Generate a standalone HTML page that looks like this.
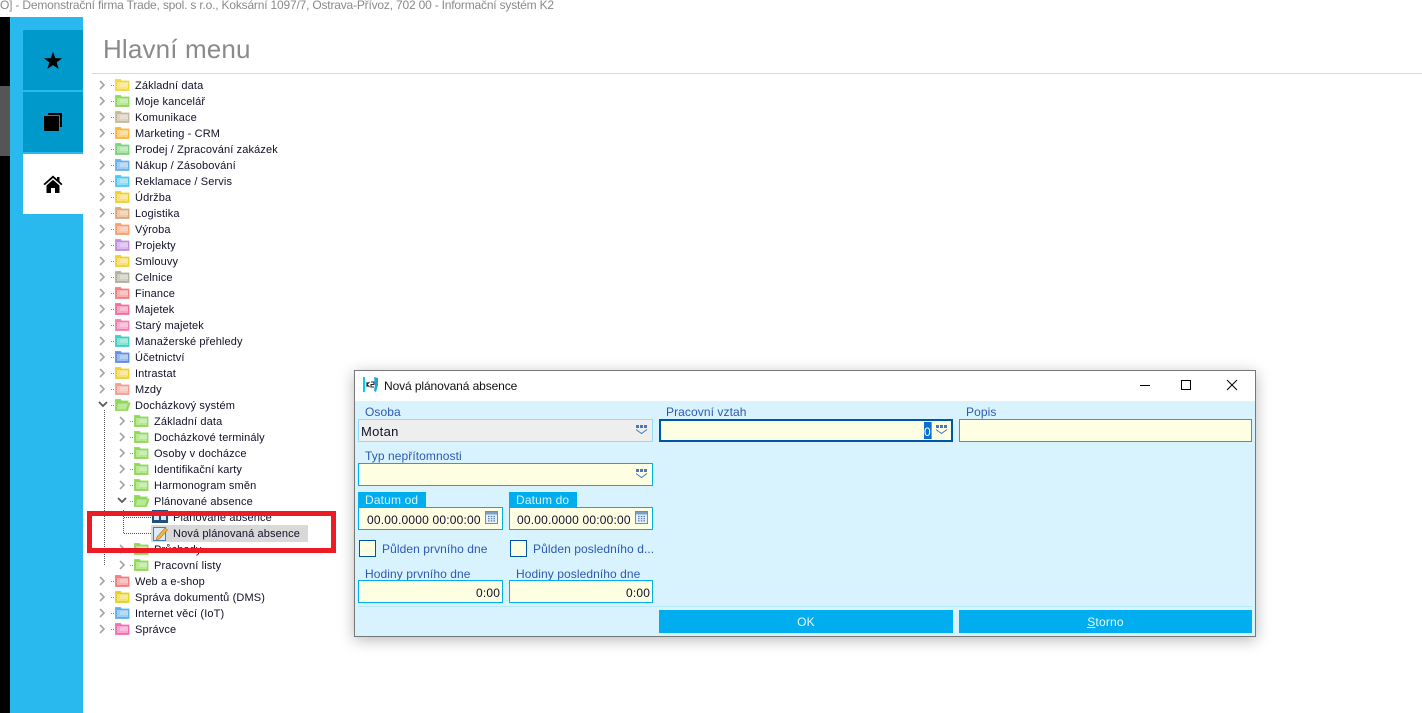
<!DOCTYPE html>
<html lang="cs">
<head>
<meta charset="utf-8">
<title>Hlavní menu</title>
<style>
html,body{margin:0;padding:0;background:#fff}
body{width:1422px;height:713px;position:relative;overflow:hidden;font-family:"Liberation Sans",sans-serif;font-size:11px;color:#10102a}
div,span,svg{position:absolute}
span{white-space:nowrap}
.r{left:0;height:16px;width:330px}
.r span{top:2px;line-height:14px;letter-spacing:.13px}
.r svg{left:0;top:0;width:330px;height:16px;overflow:visible}
.l{color:#2d5ab4;font-size:12px;line-height:14px;letter-spacing:.08px;margin-top:1px}
.i{background:#fefee2;border:1px solid #00aeef;box-sizing:border-box}
.v{font-size:12px;line-height:14px;color:#10102a;letter-spacing:.19px;margin-top:1px}
.t{background:#00aeef;color:#d8f2fe;font-size:12px;line-height:14px;letter-spacing:.15px;box-sizing:border-box;padding:1px 0 0 7px}
.b{background:#00aeef;color:#e8f8ff;font-size:12px;line-height:25px;text-align:center;letter-spacing:.2px}
.c{background:#fefee2;border:1px solid #0055a5;box-sizing:border-box}
</style>
</head>
<body>
<svg width="0" height="0" style="left:0;top:0">
<defs>
<g id="fo"><path d="M.5 1.500h5l1 1.500h7.500v9.500H.5z" fill="currentColor" stroke="currentColor" stroke-opacity=".8"/><path d="M2 4h11v7H2z" fill="#fff" fill-opacity=".38"/><path d="M5 6h8M5 8h8" stroke="#fff" stroke-opacity=".55"/></g>
<g id="op"><path d="M.5 1.500h5l1 1.500h6.500v2h2l-2.500 7.500H.5z" fill="currentColor" stroke="currentColor" stroke-opacity=".8"/><path d="M3 5.500h10l-2 6H2z" fill="#fff" fill-opacity=".4"/></g>
<path id="ch" d="M0 0l4 4-4 4" fill="none" stroke="#a6a6a6" stroke-width="1.700"/>
<path id="dn" d="M0 0l4 4 4-4" fill="none" stroke="#595959" stroke-width="1.700"/>
<g id="dd" fill="#4a78b8"><rect x="0" y="0" width="3" height="3"/><rect x="4" y="0" width="3" height="3"/><rect x="8" y="0" width="3" height="3"/><path d="M0 4.500l5.500 4 5.500-4" fill="none" stroke="#4a78b8"/></g>
<g id="cal"><rect x=".5" y=".5" width="12" height="12" fill="#e8f0f8" stroke="#6a8fb5"/><rect x="1" y="1" width="11" height="2.500" fill="#7aa0c8"/><path d="M3 5.500h1.500M5.800 5.500h1.500M8.500 5.500h1.500M3 7.700h1.500M5.800 7.700h1.500M8.500 7.700h1.500M3 9.900h1.500M5.800 9.900h1.500M8.500 9.900h1.500" stroke="#4a78b8" stroke-width="1.200"/></g>
</defs>
</svg>

<span style="left:0;top:-2px;font-size:12px;line-height:14px;color:#8a8a8a;letter-spacing:-.19px">O] - Demonstrační firma Trade, spol. s r.o., Koksární 1097/7, Ostrava-Přívoz, 702 00 - Informační systém K2</span>

<div style="left:0;top:17px;width:10px;height:696px;background:#000"></div>
<div style="left:0;top:86px;width:10px;height:70px;background:#555"></div>
<div style="left:10px;top:17px;width:73px;height:696px;background:#29b9ee"></div>
<div style="left:23px;top:30px;width:60px;height:60px;background:#0099cc"></div>
<div style="left:23px;top:92px;width:60px;height:60px;background:#0099cc"></div>
<div style="left:23px;top:154px;width:60px;height:60px;background:#fff"></div>
<svg style="left:43px;top:51px" width="20" height="20" viewBox="0 0 20 20"><path d="M10 .8l2.300 6.300 6.700.2-5.300 4.100 1.900 6.500L10 14.100l-5.600 3.800 1.900-6.500L1 7.300l6.700-.2z" fill="#000"/></svg>
<svg style="left:43px;top:112px" width="20" height="20" viewBox="0 0 20 20"><path d="M5 1h14v14h-2V3H5z" fill="#000"/><rect x="1" y="4" width="15" height="15" fill="#000"/></svg>
<svg style="left:43px;top:174px" width="20" height="20" viewBox="0 0 20 20"><path d="M10 1.500L.5 10l1.200 1.300L10 4l8.300 7.300L19.500 10l-3-2.700V3h-2.500v2.100z" fill="#000"/><path d="M3.500 11.500L10 5.800l6.500 5.700V19h-4.500v-5H8v5H3.500z" fill="#000"/></svg>

<span style="left:103px;top:34px;font-size:26px;line-height:30px;color:#8a8a8a;letter-spacing:.15px">Hlavní menu</span>
<div style="left:92px;top:73px;width:1330px;height:1px;background:#d8d8d8"></div>

<svg style="left:0;top:0" width="340" height="640">
<path d="M104.500 410V565M123.500 510V533" stroke="#555" stroke-dasharray="1 1" fill="none"/>
<path d="M124 517.500H151M124 533.500H151" stroke="#555" stroke-dasharray="1 1" fill="none"/>
</svg>

<div class="r" style="top:77px"><svg><use href="#ch" x="100" y="4"/><path d="M111 8.500h3" stroke="#888" stroke-dasharray="1 1"/><use href="#fo" x="115" y="1" color="#f5d63c"/></svg><span style="left:135px">Základní data</span></div>
<div class="r" style="top:93px"><svg><use href="#ch" x="100" y="4"/><path d="M111 8.500h3" stroke="#888" stroke-dasharray="1 1"/><use href="#fo" x="115" y="1" color="#8fd95a"/></svg><span style="left:135px">Moje kancelář</span></div>
<div class="r" style="top:109px"><svg><use href="#ch" x="100" y="4"/><path d="M111 8.500h3" stroke="#888" stroke-dasharray="1 1"/><use href="#fo" x="115" y="1" color="#c8b8a0"/></svg><span style="left:135px">Komunikace</span></div>
<div class="r" style="top:125px"><svg><use href="#ch" x="100" y="4"/><path d="M111 8.500h3" stroke="#888" stroke-dasharray="1 1"/><use href="#fo" x="115" y="1" color="#f8b83c"/></svg><span style="left:135px">Marketing - CRM</span></div>
<div class="r" style="top:141px"><svg><use href="#ch" x="100" y="4"/><path d="M111 8.500h3" stroke="#888" stroke-dasharray="1 1"/><use href="#fo" x="115" y="1" color="#7dd37a"/></svg><span style="left:135px">Prodej / Zpracování zakázek</span></div>
<div class="r" style="top:157px"><svg><use href="#ch" x="100" y="4"/><path d="M111 8.500h3" stroke="#888" stroke-dasharray="1 1"/><use href="#fo" x="115" y="1" color="#6ab0ee"/></svg><span style="left:135px">Nákup / Zásobování</span></div>
<div class="r" style="top:173px"><svg><use href="#ch" x="100" y="4"/><path d="M111 8.500h3" stroke="#888" stroke-dasharray="1 1"/><use href="#fo" x="115" y="1" color="#50c8f0"/></svg><span style="left:135px">Reklamace / Servis</span></div>
<div class="r" style="top:189px"><svg><use href="#ch" x="100" y="4"/><path d="M111 8.500h3" stroke="#888" stroke-dasharray="1 1"/><use href="#fo" x="115" y="1" color="#f0d030"/></svg><span style="left:135px">Údržba</span></div>
<div class="r" style="top:205px"><svg><use href="#ch" x="100" y="4"/><path d="M111 8.500h3" stroke="#888" stroke-dasharray="1 1"/><use href="#fo" x="115" y="1" color="#e0a878"/></svg><span style="left:135px">Logistika</span></div>
<div class="r" style="top:221px"><svg><use href="#ch" x="100" y="4"/><path d="M111 8.500h3" stroke="#888" stroke-dasharray="1 1"/><use href="#fo" x="115" y="1" color="#f8a070"/></svg><span style="left:135px">Výroba</span></div>
<div class="r" style="top:237px"><svg><use href="#ch" x="100" y="4"/><path d="M111 8.500h3" stroke="#888" stroke-dasharray="1 1"/><use href="#fo" x="115" y="1" color="#c090e0"/></svg><span style="left:135px">Projekty</span></div>
<div class="r" style="top:253px"><svg><use href="#ch" x="100" y="4"/><path d="M111 8.500h3" stroke="#888" stroke-dasharray="1 1"/><use href="#fo" x="115" y="1" color="#f0d030"/></svg><span style="left:135px">Smlouvy</span></div>
<div class="r" style="top:269px"><svg><use href="#ch" x="100" y="4"/><path d="M111 8.500h3" stroke="#888" stroke-dasharray="1 1"/><use href="#fo" x="115" y="1" color="#b0b0a0"/></svg><span style="left:135px">Celnice</span></div>
<div class="r" style="top:285px"><svg><use href="#ch" x="100" y="4"/><path d="M111 8.500h3" stroke="#888" stroke-dasharray="1 1"/><use href="#fo" x="115" y="1" color="#f08080"/></svg><span style="left:135px">Finance</span></div>
<div class="r" style="top:301px"><svg><use href="#ch" x="100" y="4"/><path d="M111 8.500h3" stroke="#888" stroke-dasharray="1 1"/><use href="#fo" x="115" y="1" color="#f070a0"/></svg><span style="left:135px">Majetek</span></div>
<div class="r" style="top:317px"><svg><use href="#ch" x="100" y="4"/><path d="M111 8.500h3" stroke="#888" stroke-dasharray="1 1"/><use href="#fo" x="115" y="1" color="#f080b0"/></svg><span style="left:135px">Starý majetek</span></div>
<div class="r" style="top:333px"><svg><use href="#ch" x="100" y="4"/><path d="M111 8.500h3" stroke="#888" stroke-dasharray="1 1"/><use href="#fo" x="115" y="1" color="#40d0c0"/></svg><span style="left:135px">Manažerské přehledy</span></div>
<div class="r" style="top:349px"><svg><use href="#ch" x="100" y="4"/><path d="M111 8.500h3" stroke="#888" stroke-dasharray="1 1"/><use href="#fo" x="115" y="1" color="#6090e0"/></svg><span style="left:135px">Účetnictví</span></div>
<div class="r" style="top:365px"><svg><use href="#ch" x="100" y="4"/><path d="M111 8.500h3" stroke="#888" stroke-dasharray="1 1"/><use href="#fo" x="115" y="1" color="#f0d030"/></svg><span style="left:135px">Intrastat</span></div>
<div class="r" style="top:381px"><svg><use href="#ch" x="100" y="4"/><path d="M111 8.500h3" stroke="#888" stroke-dasharray="1 1"/><use href="#fo" x="115" y="1" color="#f0a090"/></svg><span style="left:135px">Mzdy</span></div>
<div class="r" style="top:397px"><svg><use href="#dn" x="99" y="5"/><path d="M111 8.500h3" stroke="#888" stroke-dasharray="1 1"/><use href="#op" x="115" y="1" color="#8fd95a"/></svg><span style="left:135px">Docházkový systém</span></div>

<div class="r" style="top:413px"><svg><use href="#ch" x="120" y="4"/><path d="M130 8.500h3" stroke="#888" stroke-dasharray="1 1"/><use href="#fo" x="134" y="1" color="#8fd95a"/></svg><span style="left:154px">Základní data</span></div>
<div class="r" style="top:429px"><svg><use href="#ch" x="120" y="4"/><path d="M130 8.500h3" stroke="#888" stroke-dasharray="1 1"/><use href="#fo" x="134" y="1" color="#8fd95a"/></svg><span style="left:154px">Docházkové terminály</span></div>
<div class="r" style="top:445px"><svg><use href="#ch" x="120" y="4"/><path d="M130 8.500h3" stroke="#888" stroke-dasharray="1 1"/><use href="#fo" x="134" y="1" color="#8fd95a"/></svg><span style="left:154px">Osoby v docházce</span></div>
<div class="r" style="top:461px"><svg><use href="#ch" x="120" y="4"/><path d="M130 8.500h3" stroke="#888" stroke-dasharray="1 1"/><use href="#fo" x="134" y="1" color="#8fd95a"/></svg><span style="left:154px">Identifikační karty</span></div>
<div class="r" style="top:477px"><svg><use href="#ch" x="120" y="4"/><path d="M130 8.500h3" stroke="#888" stroke-dasharray="1 1"/><use href="#fo" x="134" y="1" color="#8fd95a"/></svg><span style="left:154px">Harmonogram směn</span></div>
<div class="r" style="top:493px"><svg><use href="#dn" x="118" y="5"/><path d="M130 8.500h3" stroke="#888" stroke-dasharray="1 1"/><use href="#op" x="134" y="1" color="#8fd95a"/></svg><span style="left:154px">Plánované absence</span></div>
<div class="r" style="top:509px"><svg><rect x="152" y="1" width="16" height="13" fill="#1f4e80"/><path d="M154 3h5v8h-5zM161 3h5v8h-5z" fill="#dfe8f2"/></svg><span style="left:173px">Plánované absence</span></div>
<div style="left:151px;top:525px;width:157px;height:17px;background:#d9d9d9"></div>
<div class="r" style="top:525px"><svg><rect x="153.500" y="2.500" width="12" height="13" fill="#dcebf8" stroke="#3b7fc4"/><path d="M157 12l8-9 2.500 2-8 9-3.500 1z" fill="#f0b840" stroke="#b8802a" stroke-width=".7"/></svg><span style="left:173px">Nová plánovaná absence</span></div>
<div class="r" style="top:541px"><svg><use href="#ch" x="120" y="4"/><path d="M130 8.500h3" stroke="#888" stroke-dasharray="1 1"/><use href="#fo" x="134" y="1" color="#8fd95a"/></svg><span style="left:154px">Průchody</span></div>
<div class="r" style="top:557px"><svg><use href="#ch" x="120" y="4"/><path d="M130 8.500h3" stroke="#888" stroke-dasharray="1 1"/><use href="#fo" x="134" y="1" color="#8fd95a"/></svg><span style="left:154px">Pracovní listy</span></div>

<div class="r" style="top:573px"><svg><use href="#ch" x="100" y="4"/><path d="M111 8.500h3" stroke="#888" stroke-dasharray="1 1"/><use href="#fo" x="115" y="1" color="#f08080"/></svg><span style="left:135px">Web a e-shop</span></div>
<div class="r" style="top:589px"><svg><use href="#ch" x="100" y="4"/><path d="M111 8.500h3" stroke="#888" stroke-dasharray="1 1"/><use href="#fo" x="115" y="1" color="#e8d020"/></svg><span style="left:135px">Správa dokumentů (DMS)</span></div>
<div class="r" style="top:605px"><svg><use href="#ch" x="100" y="4"/><path d="M111 8.500h3" stroke="#888" stroke-dasharray="1 1"/><use href="#fo" x="115" y="1" color="#60b0f0"/></svg><span style="left:135px">Internet věcí (IoT)</span></div>
<div class="r" style="top:621px"><svg><use href="#ch" x="100" y="4"/><path d="M111 8.500h3" stroke="#888" stroke-dasharray="1 1"/><use href="#fo" x="115" y="1" color="#f070b0"/></svg><span style="left:135px">Správce</span></div>

<div style="left:87px;top:511px;width:249px;height:42px;border:5px solid #ed1c24;box-sizing:border-box"></div>

<!-- dialog -->
<div style="left:354px;top:370px;width:902px;height:267px;box-sizing:border-box;border:1px solid #777;background:#d8f2fe;box-shadow:0 3px 14px rgba(0,0,0,.28)"></div>
<div style="left:355px;top:371px;width:900px;height:30px;background:#fff"></div>
<svg style="left:362px;top:376px" width="18" height="18" viewBox="0 0 18 18"><rect x="1" y="1" width="2" height="15" fill="#00d0e8"/><rect x="3" y="3" width="11" height="11" fill="#fff"/><path d="M5 6v5M5 8.500l2.500-2.500M5 8.500l2.500 2.500M9 6h3v2.500H9V11h3" stroke="#222" stroke-width="1.100" fill="none"/><path d="M12 1l4 1v7l-2 7-2-1 1-6z" fill="#1ba8d8"/></svg>
<span style="left:384px;top:379px;font-size:12px;line-height:14px;color:#111;letter-spacing:-.1px">Nová plánovaná absence</span>
<svg style="left:1130px;top:375px" width="120" height="22"><path d="M10 10.500h10" stroke="#000" stroke-width="1"/><rect x="51.500" y="5.500" width="9" height="9" fill="none" stroke="#000"/><path d="M97 5l10 10M107 5L97 15" stroke="#000" stroke-width="1"/></svg>

<span class="l" style="left:365px;top:404px">Osoba</span>
<div class="i" style="left:358px;top:419px;width:295px;height:23px;background:#eeeeee;border-color:#8fdcff"></div>
<span class="v" style="left:361px;top:424px;font-size:13px;letter-spacing:.3px">Motan</span>
<svg style="left:636px;top:425px" width="12" height="12"><use href="#dd"/></svg>

<span class="l" style="left:666px;top:404px">Pracovní vztah</span>
<div class="i" style="left:659px;top:419px;width:294px;height:23px;border:2px solid #0055a5"></div>
<div style="left:924px;top:422px;width:7px;height:17px;background:#0a6fd0"></div>
<div style="left:931px;top:422px;width:1px;height:17px;background:#f08020"></div>
<span class="v" style="left:924px;top:424px;color:#fff">0</span>
<svg style="left:936px;top:425px" width="12" height="12"><use href="#dd"/></svg>

<span class="l" style="left:966px;top:404px">Popis</span>
<div class="i" style="left:959px;top:419px;width:293px;height:23px"></div>

<span class="l" style="left:365px;top:448px">Typ nepřítomnosti</span>
<div class="i" style="left:358px;top:463px;width:295px;height:23px"></div>
<svg style="left:636px;top:469px" width="12" height="12"><use href="#dd"/></svg>

<div class="t" style="left:358px;top:492px;width:68px;height:15px">Datum od</div>
<div class="i" style="left:358px;top:507px;width:145px;height:23px"></div>
<span class="v" style="left:367px;top:512px">00.00.0000 00:00:00</span>
<svg style="left:485px;top:511px" width="13" height="13"><use href="#cal"/></svg>

<div class="t" style="left:509px;top:492px;width:68px;height:15px">Datum do</div>
<div class="i" style="left:509px;top:507px;width:144px;height:23px"></div>
<span class="v" style="left:517px;top:512px">00.00.0000 00:00:00</span>
<svg style="left:635px;top:511px" width="13" height="13"><use href="#cal"/></svg>

<div class="c" style="left:359px;top:540px;width:17px;height:17px"></div>
<span class="l" style="left:382px;top:541px">Půlden prvního dne</span>
<div class="c" style="left:510px;top:540px;width:17px;height:17px"></div>
<span class="l" style="left:533px;top:541px">Půlden posledního d...</span>

<span class="l" style="left:365px;top:566px">Hodiny prvního dne</span>
<div class="i" style="left:358px;top:580px;width:145px;height:23px"></div>
<span class="v" style="left:476px;top:585px;letter-spacing:.2px">0:00</span>
<span class="l" style="left:516px;top:566px">Hodiny posledního dne</span>
<div class="i" style="left:509px;top:580px;width:144px;height:23px"></div>
<span class="v" style="left:626px;top:585px;letter-spacing:.2px">0:00</span>

<div style="left:358px;top:606px;width:894px;height:1px;background:#b8e8fc"></div>
<div class="b" style="left:659px;top:610px;width:294px;height:23px">OK</div>
<div class="b" style="left:959px;top:610px;width:293px;height:23px"><u>S</u>torno</div>
</body>
</html>
